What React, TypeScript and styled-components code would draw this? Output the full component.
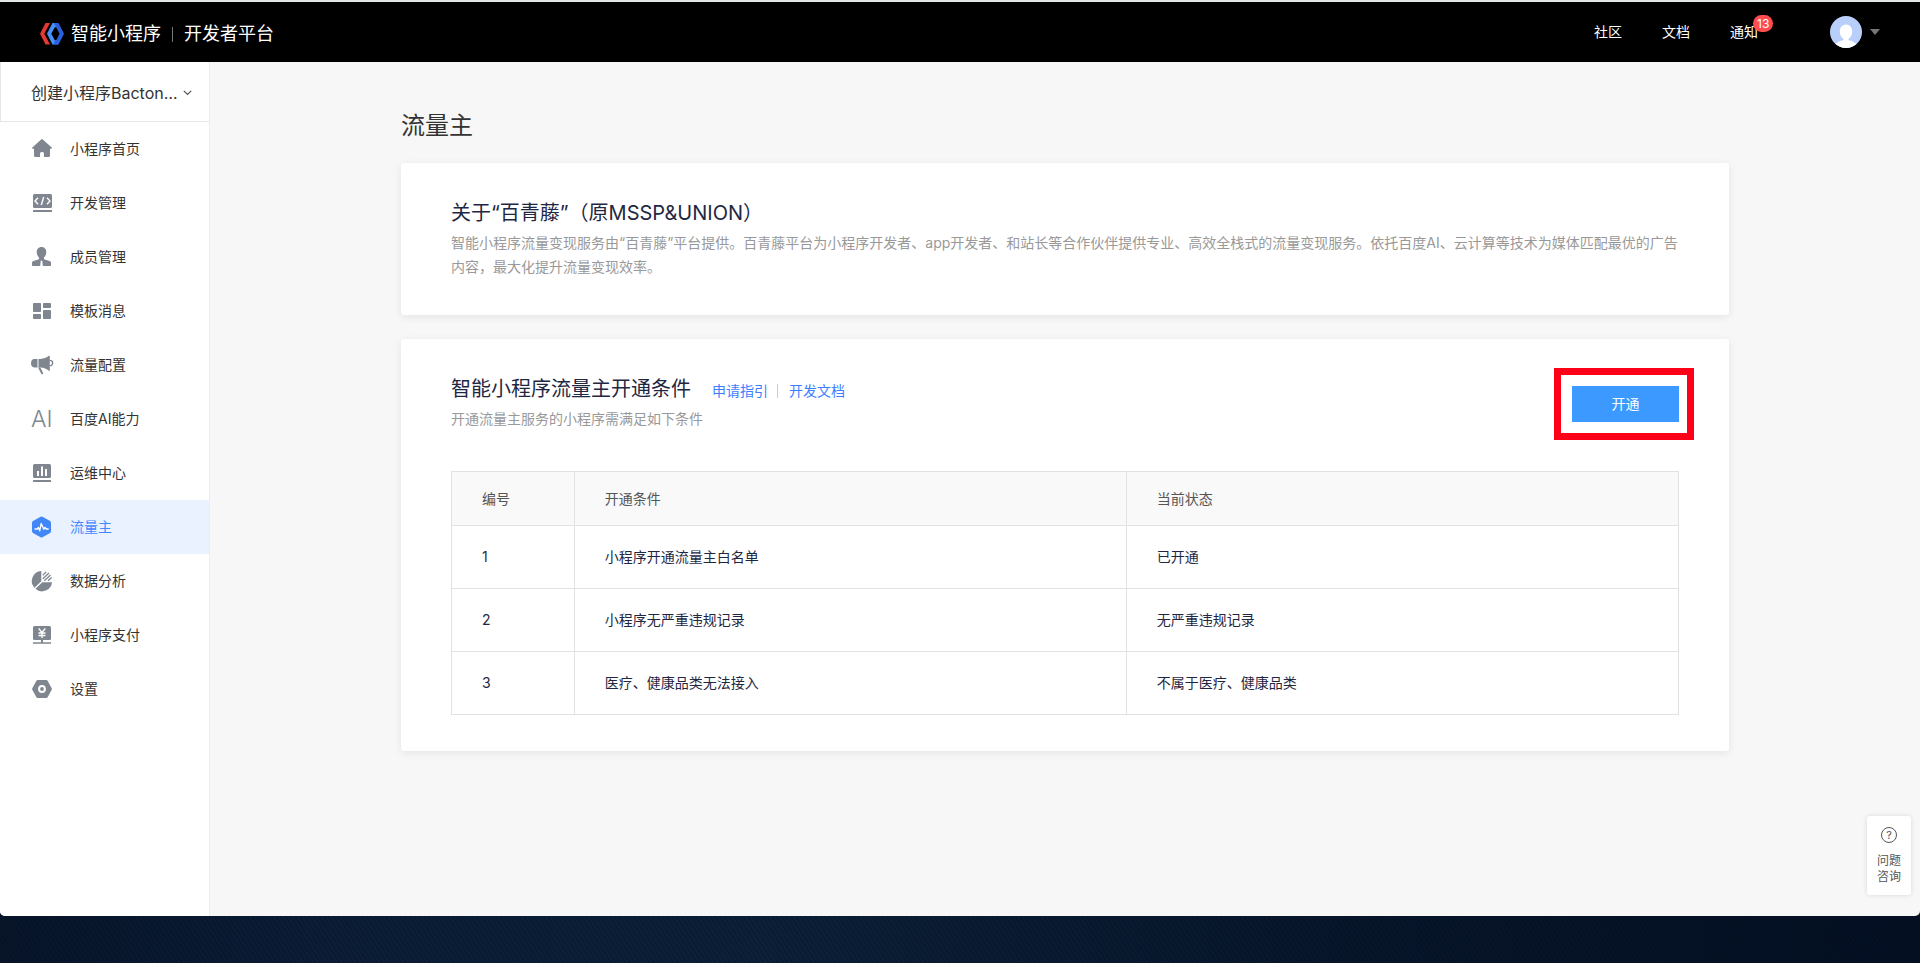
import React from "react";
import styled, { createGlobalStyle, css } from "styled-components";

const GlobalStyle = createGlobalStyle`
  *, *::before, *::after { box-sizing: border-box; }
  body {
    margin: 0;
    background: #071427;
    color: #333;
    font-family: Inter, "Noto Sans CJK SC", sans-serif;
    font-size: 14px;
    line-height: 24px;
    text-spacing-trim: space-all;
  }
  h1, h2, p, ul { margin: 0; padding: 0; font-weight: 400; }
  ul { list-style: none; }
  a { color: inherit; text-decoration: none; }
  button, select { font: inherit; color: inherit; }
`;

const Desktop = styled.div`
  display: flex;
  flex-direction: column;
  min-height: 100vh;
  padding-bottom: 47px;
  background:
    repeating-linear-gradient(57deg, rgba(0, 5, 15, 0.2) 0 1px, transparent 2px 4px),
    linear-gradient(90deg, #07152a 0%, #0b1d37 16%, #0c2039 40%, #07162b 70%, #041023 100%);
`;

const BrowserWindow = styled.div`
  position: relative;
  flex: 1;
  display: flex;
  flex-direction: column;
  overflow: hidden;
  background: #f7f7f7;
  border-top: 2px solid #e3e6e7;
  border-radius: 0 0 5px 5px;
`;

const Header = styled.header`
  display: flex;
  align-items: center;
  justify-content: space-between;
  height: 60px;
  padding: 0 40px;
  background: #000;
  color: #fff;
`;

const Brand = styled.a`
  display: flex;
  align-items: center;
  padding-top: 4px;
  font-size: 18px;
  svg { margin-right: 7px; }
`;

const BrandDivider = styled.span`
  width: 1px;
  height: 15px;
  margin: 0 11px;
  background: #777;
`;

const HeaderNav = styled.nav`
  display: flex;
  align-items: center;
  gap: 40px;
`;

const HeaderLink = styled.a`
  position: relative;
`;

const Badge = styled.span`
  position: absolute;
  left: 23px;
  top: -5px;
  padding: 0 4px;
  border-radius: 9px;
  background: #ff4d4f;
  color: #fff;
  font-size: 12px;
  line-height: 17px;
`;

const AccountButton = styled.button`
  display: flex;
  align-items: center;
  gap: 8px;
  margin-left: 32px;
  padding: 0;
  border: 0;
  background: none;
  cursor: pointer;
`;

const Body = styled.div`
  flex: 1;
  display: flex;
`;

const Sidebar = styled.aside`
  flex: none;
  width: 210px;
  background: #fff;
  border-right: 1px solid #ececec;
`;

const AppPicker = styled.label`
  display: grid;
  align-items: center;
  height: 60px;
  padding: 2px 17px 0 30px;
  border: solid #e6e6e6;
  border-width: 0 0 1px 1px;
  > * { grid-area: 1 / 1; }
  svg { justify-self: end; pointer-events: none; }
`;

const PickerSelect = styled.select`
  width: 100%;
  height: 32px;
  padding: 0;
  border: 0;
  appearance: none;
  background: none;
  font-size: 16px;
`;

const NavItem = styled.a<{ $active?: boolean }>`
  display: flex;
  align-items: center;
  gap: 18px;
  height: 54px;
  padding-left: 32px;
  color: #333;
  svg { color: #7f868f; overflow: visible; }
  ${(p) =>
    p.$active &&
    css`
      background: #eaf2ff;
      color: #3f88ff;
      svg { color: #4287f7; }
    `}
`;

const Main = styled.main`
  flex: 1;
  min-width: 0;
  padding: 48px 40px;
`;

const Content = styled.div`
  display: flex;
  flex-direction: column;
  max-width: 1328px;
  margin: 0 auto;
`;

const PageTitle = styled.h1`
  margin-bottom: 21px;
  font-size: 24px;
  line-height: 32px;
`;

const Card = styled.section`
  margin-bottom: 24px;
  padding: 36px 50px;
  background: #fff;
  border-radius: 3px;
  box-shadow: 0 2px 8px rgba(0, 0, 0, 0.08);
`;

const CardTitle = styled.h2`
  color: #1f2742;
  font-size: 20px;
  line-height: 28px;
`;

const Description = styled.p`
  margin-top: 4px;
  color: #999;
`;

const CardHead = styled.div`
  display: flex;
  align-items: flex-start;
  justify-content: space-between;
  margin-bottom: 40px;
`;

const TitleRow = styled.div`
  display: flex;
  align-items: baseline;
`;

const TitleLinks = styled.nav`
  display: flex;
  align-items: center;
  margin-left: 21px;
  color: #3d7eff;
`;

const LinkDivider = styled.span`
  width: 1px;
  height: 14px;
  margin: 0 11px 0 9px;
  background: #ccc;
`;

const ActionArea = styled.div`
  position: relative;
  margin-top: 11px;
`;

const OpenButton = styled.button`
  display: block;
  width: 107px;
  height: 36px;
  padding: 0;
  border: 0;
  background: #3b99ff;
  color: #fff;
  cursor: pointer;
`;

const Highlight = styled.div`
  position: absolute;
  inset: -18px -15px -18px -18px;
  border: 7px solid #ff0019;
  pointer-events: none;
`;

const Conditions = styled.table`
  width: 100%;
  table-layout: fixed;
  border-collapse: collapse;
  color: #1f2742;
  th, td {
    height: 63px;
    padding: 0 30px;
    border: 1px solid #e2e2e2;
    text-align: left;
    font-weight: 400;
  }
  th {
    height: 54px;
    background: #f9f9f9;
    color: #555;
  }
  th:first-child { width: 10%; }
`;

const HelpButton = styled.button`
  position: absolute;
  right: 9px;
  bottom: 21px;
  display: flex;
  flex-direction: column;
  align-items: center;
  gap: 9px;
  width: 44px;
  padding: 10px 8px;
  border: 0;
  border-radius: 3px;
  background: #fff;
  box-shadow: 0 0 5px rgba(0, 0, 0, 0.12);
  color: #555;
  font-size: 12px;
  line-height: 16px;
  cursor: pointer;
`;

const Svg = ({ children }: { children: React.ReactNode }) => (
  <svg width="20" height="20" viewBox="0 0 20 20" fill="currentColor" aria-hidden="true">
    {children}
  </svg>
);

const icons = {
  home: (
    <Svg>
      <path d="M9.2.4a1.2 1.2 0 0 1 1.6 0l8.9 8.2c.6.6.3 1.2-.5 1.2H18v6.700a1.500 1.500 0 0 1-1.500 1.500H12v-3.500a1.500 1.500 0 0 0-1.500-1.500h-1A1.500 1.500 0 0 0 8 14.500V18H3.500A1.500 1.500 0 0 1 2 16.500V9.800H.8c-.8 0-1.100-.6-.5-1.200z" />
    </Svg>
  ),
  code: (
    <Svg>
      <rect x="1" y="1" width="19" height="14" rx="1.5" />
      <rect x="1" y="17" width="19" height="2" rx="0.5" />
      <path d="M6 4.700 3 8l3 3.300M15 4.700 18 8l-3 3.300M11.700 4 9.300 12" fill="none" stroke="#fff" strokeWidth="1.400" />
    </Svg>
  ),
  person: (
    <Svg>
      <path d="M9.500 0c3 0 4.800 2.200 4.800 5 0 2.400-1 4.300-2.300 5.500v1.700l5.500 1.800c1 .4 1.500 1 1.500 2v2.200c0 .5-.3.800-.8.800H.8c-.5 0-.8-.3-.8-.8V16c0-1 .5-1.600 1.500-2L7 12.200v-1.700C5.700 9.300 4.700 7.400 4.700 5c0-2.800 1.800-5 4.800-5z" />
      <path d="M8.700 13.700h1.600l.5 5.300H8.200z" fill="#fff" />
    </Svg>
  ),
  blocks: (
    <Svg>
      <rect x="1" y="2" width="8" height="9" rx="0.8" />
      <rect x="11" y="2" width="8" height="5" rx="0.8" />
      <rect x="1" y="13" width="8" height="5" rx="0.8" />
      <rect x="11" y="9" width="8" height="9" rx="0.8" />
    </Svg>
  ),
  horn: (
    <Svg>
      <path d="M5.500 4v8.400H2.200C.2 12.400-1 10.500-1 8.200S.2 4 2.200 4zM6.500 4h2C12 3.800 14.500 2.600 17 .8c.5-.3.800-.1.800.4v14.200c0 .5-.3.700-.8.400-2.500-1.900-5-3.300-8.500-3.400h-2z" />
      <path d="M6 12.500h2.400l3 6-1.700 1z" />
      <path d="M17.500 5.400c4.200-.5 4.200 5.700 0 5.200" fill="none" stroke="currentColor" strokeWidth="1.400" />
    </Svg>
  ),
  ai: (
    <Svg>
      <text x="-1" y="18" fontFamily="Inter, sans-serif" fontWeight="300" fontSize="23">AI</text>
    </Svg>
  ),
  chart: (
    <Svg>
      <rect x="1" y="1" width="18" height="14" rx="1.5" />
      <rect x="1" y="17" width="18" height="2" rx="0.5" />
      <path d="M5 8h2v5H5zM9 3.500h2V13H9zM13 6h2v7h-2z" fill="#fff" />
    </Svg>
  ),
  pulse: (
    <Svg>
      <path d="M8.600-.2a2 2 0 0 1 1.900 0l7.600 4.300a1.900 1.900 0 0 1 .9 1.600v8.600c0 .7-.3 1.300-.9 1.600l-7.600 4.400a2 2 0 0 1-1.900 0L1 15.900a1.900 1.900 0 0 1-1-1.600V5.700c0-.7.400-1.300 1-1.600z" />
      <path d="M3 12h2.300l1.200-1.600 1.200 3.400 1.500-7.300 2.600 5.700 1.200-1.800 1.200 1.600h2" fill="none" stroke="#fff" strokeWidth="1.300" strokeLinejoin="round" strokeLinecap="round" />
    </Svg>
  ),
  pie: (
    <Svg>
      <path d="M9.300 0v10.200L2.500 16.800A10 10 0 0 1 9.300 0zM10.300 11.200H20A10 10 0 0 1 3.400 17.800z" />
      <path d="M10.800 4.200 14.200.9M10.800 7.700 17 2M12.300 9.700 18.500 4M16 9.700l3.600-3.300" stroke="currentColor" strokeWidth="1.300" />
    </Svg>
  ),
  pay: (
    <Svg>
      <rect x="1" y="1" width="18" height="14" rx="1.500" />
      <path d="M9 15h2v2.200h8v1.600H1v-1.600h8z" />
      <path d="M6.700 3.500 10 7.500l3.300-4M10 7.500v5.500M6.500 8h7M6.500 10.500h7" fill="none" stroke="#fff" strokeWidth="1.300" />
    </Svg>
  ),
  settings: (
    <Svg>
      <path d="M5.700 1h8.600c.6 0 1 .3 1.300.8l4.100 7.400c.3.500.3 1.100 0 1.600l-4.100 7.400c-.3.500-.7.800-1.300.8H5.700c-.6 0-1-.3-1.300-.8L.3 10.800a1.600 1.600 0 0 1 0-1.600l4.100-7.400c.3-.5.700-.8 1.300-.8z" />
      <circle cx="10" cy="10" r="2.900" fill="none" stroke="#fff" strokeWidth="2" />
    </Svg>
  ),
};

const navItems: { icon: keyof typeof icons; label: string; active?: boolean }[] = [
  { icon: "home", label: "小程序首页" },
  { icon: "code", label: "开发管理" },
  { icon: "person", label: "成员管理" },
  { icon: "blocks", label: "模板消息" },
  { icon: "horn", label: "流量配置" },
  { icon: "ai", label: "百度AI能力" },
  { icon: "chart", label: "运维中心" },
  { icon: "pulse", label: "流量主", active: true },
  { icon: "pie", label: "数据分析" },
  { icon: "pay", label: "小程序支付" },
  { icon: "settings", label: "设置" },
];

const conditions = [
  ["小程序开通流量主白名单", "已开通"],
  ["小程序无严重违规记录", "无严重违规记录"],
  ["医疗、健康品类无法接入", "不属于医疗、健康品类"],
];

const Logo = () => (
  <svg width="24" height="22" viewBox="0 0 24 22" aria-hidden="true">
    <path d="M5.500 0H10L4.300 10.800 10 21.500H5.500L0 10.800z" fill="#e23a33" />
    <path d="M12.500 0H18l-1 4.300h-2.200L11.300 10.800l3.500 6.400H17l1 4.300h-5.500L7 10.800z" fill="#4a90fb" />
    <path d="M13.800 0h4.700L24 10.800l-5.500 10.700h-4.700l1-4.300h1.400l3.400-6.400-3.400-6.500z" fill="#2b5fe0" />
  </svg>
);

const Avatar = () => (
  <svg width="32" height="32" viewBox="0 0 32 32" aria-hidden="true">
    <clipPath id="avatar-disc"><circle cx="16" cy="16" r="16" /></clipPath>
    <g clipPath="url(#avatar-disc)">
      <rect width="32" height="32" fill="#b9cffb" />
      <path d="M16 8.500c3.800 0 6.200 2.900 6.200 6.900 0 3.300-1.600 6.300-3.700 7.400v1.500c3.500.5 6.500 2 8.500 4.200V32H5v-3.500c2-2.200 5-3.700 8.500-4.200v-1.500c-2.100-1.100-3.700-4.100-3.700-7.400 0-4 2.400-6.900 6.200-6.900z" fill="#fff" />
    </g>
  </svg>
);

export default function App() {
  return (
    <Desktop>
      <GlobalStyle />
      <BrowserWindow>
        <Header>
          <Brand href="#">
            <Logo />
            智能小程序
            <BrandDivider />
            开发者平台
          </Brand>
          <HeaderNav>
            <HeaderLink href="#">社区</HeaderLink>
            <HeaderLink href="#">文档</HeaderLink>
            <HeaderLink href="#">
              通知<Badge>13</Badge>
            </HeaderLink>
            <AccountButton aria-label="账号">
              <Avatar />
              <svg width="10" height="6" viewBox="0 0 10 6" aria-hidden="true">
                <path d="M0 0h10L5 6z" fill="#777" />
              </svg>
            </AccountButton>
          </HeaderNav>
        </Header>
        <Body>
          <Sidebar>
            <AppPicker>
              <PickerSelect aria-label="选择小程序">
                <option>创建小程序Bacton…</option>
              </PickerSelect>
              <svg width="9" height="6" viewBox="0 0 9 6" fill="none" stroke="#555" strokeWidth="1.200" aria-hidden="true">
                <path d="m.8.8 3.700 3.700L8.200.8" />
              </svg>
            </AppPicker>
            <nav>
              <ul>
                {navItems.map((item) => (
                  <li key={item.label}>
                    <NavItem href="#" $active={item.active} aria-current={item.active ? "page" : undefined}>
                      {icons[item.icon]}
                      {item.label}
                    </NavItem>
                  </li>
                ))}
              </ul>
            </nav>
          </Sidebar>
          <Main>
            <Content>
              <PageTitle>流量主</PageTitle>
              <Card>
                <CardTitle>关于“百青藤”（原MSSP&amp;UNION）</CardTitle>
                <Description>
                  智能小程序流量变现服务由“百青藤”平台提供。百青藤平台为小程序开发者、app开发者、和站长等合作伙伴提供专业、高效全栈式的流量变现服务。依托百度AI、云计算等技术为媒体匹配最优的广告内容，最大化提升流量变现效率。
                </Description>
              </Card>
              <Card>
                <CardHead>
                  <div>
                    <TitleRow>
                      <CardTitle>智能小程序流量主开通条件</CardTitle>
                      <TitleLinks>
                        <a href="#">申请指引</a>
                        <LinkDivider />
                        <a href="#">开发文档</a>
                      </TitleLinks>
                    </TitleRow>
                    <Description>开通流量主服务的小程序需满足如下条件</Description>
                  </div>
                  <ActionArea>
                    <OpenButton>开通</OpenButton>
                    <Highlight />
                  </ActionArea>
                </CardHead>
                <Conditions>
                  <thead>
                    <tr>
                      <th scope="col">编号</th>
                      <th scope="col">开通条件</th>
                      <th scope="col">当前状态</th>
                    </tr>
                  </thead>
                  <tbody>
                    {conditions.map(([condition, status], i) => (
                      <tr key={condition}>
                        <td>{i + 1}</td>
                        <td>{condition}</td>
                        <td>{status}</td>
                      </tr>
                    ))}
                  </tbody>
                </Conditions>
              </Card>
            </Content>
          </Main>
        </Body>
        <HelpButton>
          <svg width="18" height="18" viewBox="0 0 18 18" aria-hidden="true">
            <circle cx="9" cy="9" r="7.500" fill="none" stroke="currentColor" />
            <text x="9" y="13" textAnchor="middle" fontSize="11" fill="currentColor">?</text>
          </svg>
          <span>
            问题
            <br />
            咨询
          </span>
        </HelpButton>
      </BrowserWindow>
    </Desktop>
  );
}
